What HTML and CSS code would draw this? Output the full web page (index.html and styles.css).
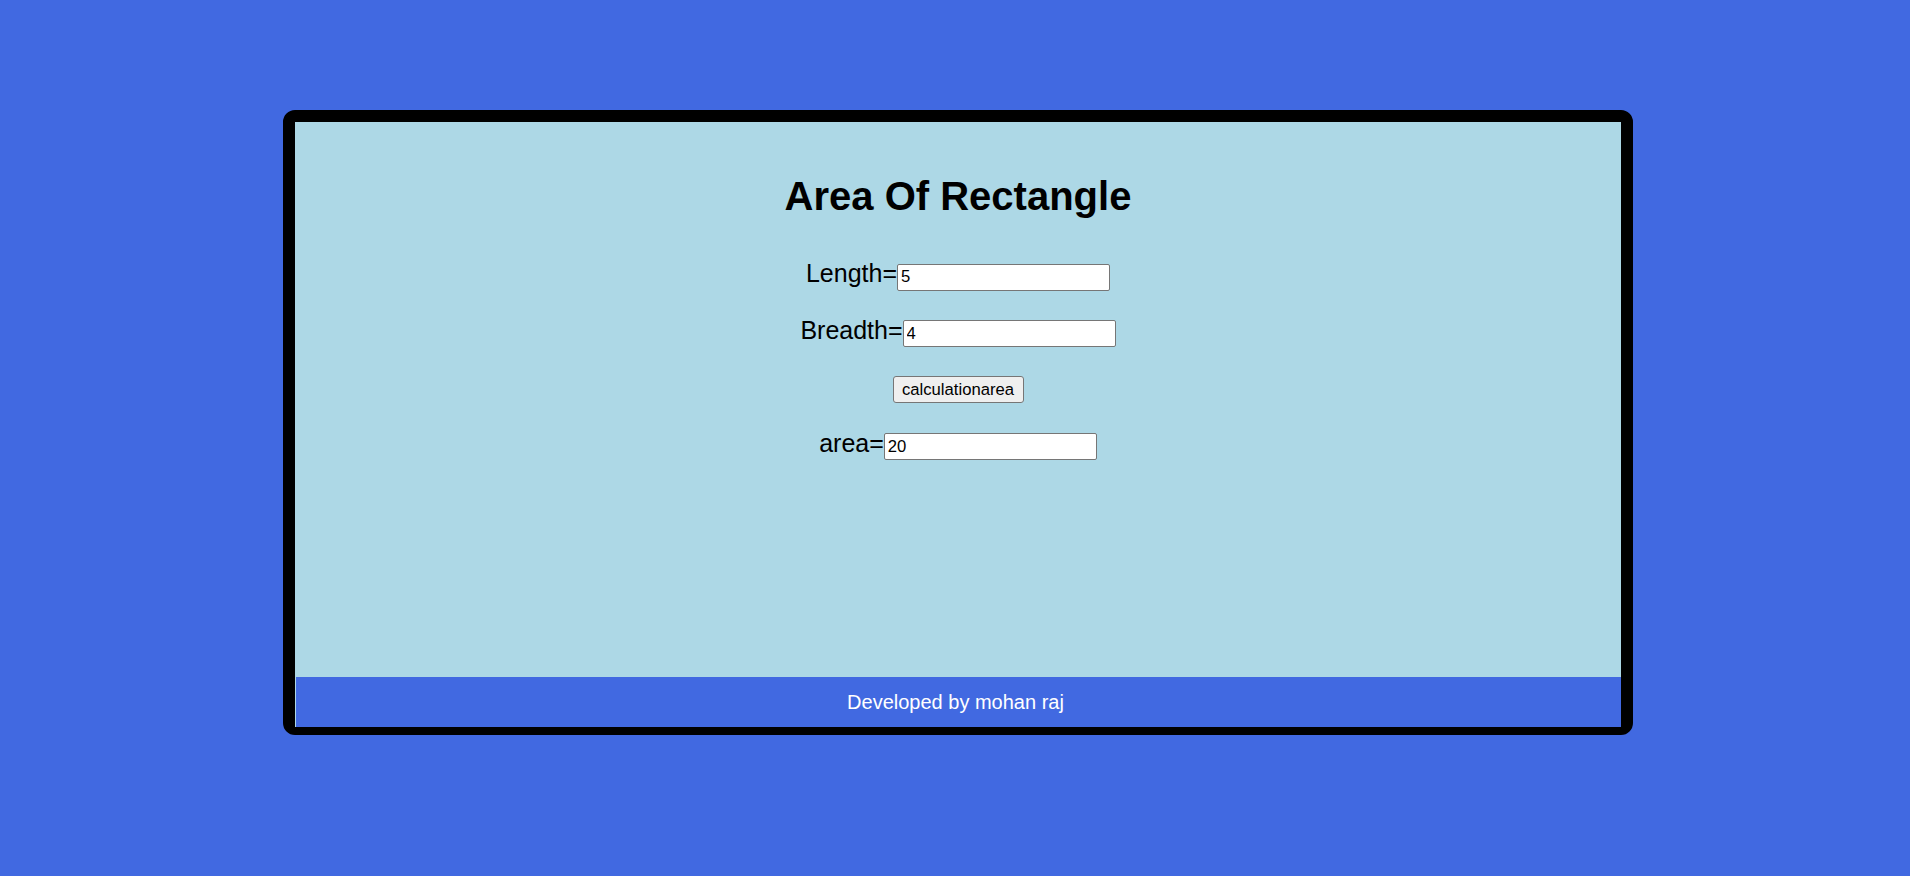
FILE: index.html
```html
<!DOCTYPE html>
<html lang="en">
<head>
<meta charset="utf-8">
<title>Area Of Rectangle</title>
<link rel="stylesheet" href="styles.css">
</head>
<body>
  <div class="card">
    <main class="content">
      <h1 class="title">Area Of Rectangle</h1>
      <div class="row">
        <label class="label" for="len">Length=</label>
        <input class="field" id="len" type="text" value="5">
      </div>
      <div class="row">
        <label class="label" for="bre">Breadth=</label>
        <input class="field" id="bre" type="text" value="4">
      </div>
      <div class="row">
        <button class="btn" type="button">calculationarea</button>
      </div>
      <div class="row">
        <label class="label" for="area">area=</label>
        <input class="field" id="area" type="text" value="20">
      </div>
    </main>
    <footer class="footer">Developed by mohan raj</footer>
  </div>
</body>
</html>
```

FILE: styles.css
```css
html, body {
  margin: 0;
  padding: 0;
}

body {
  background: #4169e1;
  font-family: "Liberation Sans", Arial, sans-serif;
  width: 1910px;
  height: 876px;
  padding-top: 110px;
  box-sizing: border-box;
  overflow: hidden;
}

.card {
  margin-left: 283px;
  width: 1350px;
  height: 625px;
  box-sizing: border-box;
  border: solid #000;
  border-width: 12px 12px 8px 12px;
  border-radius: 12px;
  background: #add8e6;
  display: flex;
  flex-direction: column;
}

.content {
  flex: 1;
  display: flex;
  flex-direction: column;
  align-items: center;
}

.title {
  margin: 51px 0 44px;
  font-size: 40px;
  line-height: 46px;
  font-weight: bold;
  color: #000;
}

.row {
  display: flex;
  justify-content: center;
  align-items: baseline;
  height: 27px;
  margin-bottom: 29.67px;
}

.label {
  font-size: 25px;
  line-height: 20px;
  color: #000;
}

.field {
  box-sizing: border-box;
  width: 213px;
  height: 27px;
  margin: 0;
  padding: 1px 3px;
  border: 1px solid #767676;
  border-radius: 2px;
  background: #fff;
  font-family: "Liberation Sans", Arial, sans-serif;
  font-size: 16.67px;
  color: #000;
}

.btn {
  box-sizing: border-box;
  width: 131px;
  height: 27px;
  margin: 0;
  padding: 0;
  border: 1px solid #767676;
  border-radius: 3px;
  background: #efefef;
  font-family: "Liberation Sans", Arial, sans-serif;
  font-size: 16.67px;
  color: #000;
}

.footer {
  height: 50px;
  margin-left: 1px;
  padding-right: 6px;
  background: #4169e1;
  color: #fff;
  font-size: 20px;
  display: flex;
  align-items: center;
  justify-content: center;
}
```
